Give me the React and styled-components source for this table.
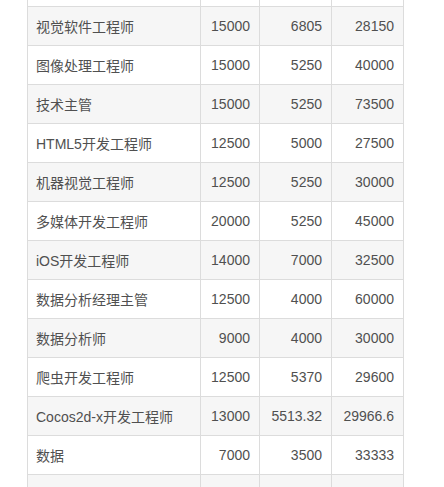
import React from "react";
import styled, { createGlobalStyle } from "styled-components";

const widths = [173, 59, 72, 72];

const rows = [
  ["", "", "", ""],
  ["视觉软件工程师", "15000", "6805", "28150"],
  ["图像处理工程师", "15000", "5250", "40000"],
  ["技术主管", "15000", "5250", "73500"],
  ["HTML5开发工程师", "12500", "5000", "27500"],
  ["机器视觉工程师", "12500", "5250", "30000"],
  ["多媒体开发工程师", "20000", "5250", "45000"],
  ["iOS开发工程师", "14000", "7000", "32500"],
  ["数据分析经理主管", "12500", "4000", "60000"],
  ["数据分析师", "9000", "4000", "30000"],
  ["爬虫开发工程师", "12500", "5370", "29600"],
  ["Cocos2d-x开发工程师", "13000", "5513.32", "29966.6"],
  ["数据", "7000", "3500", "33333"],
  ["", "", "", ""],
];

const GlobalStyle = createGlobalStyle`
  html, body {
    margin: 0;
    padding: 0;
    background: #fff;
    overflow: hidden;
  }
`;

const Page = styled.div`
  width: 444px;
  height: 487px;
  overflow: hidden;
  padding-left: 27px;
  box-sizing: border-box;
`;

const Table = styled.table`
  margin-top: -33px;
  width: 377px;
  table-layout: fixed;
  border-collapse: collapse;
  font-family: "Liberation Sans", "Noto Sans CJK SC", sans-serif;
  font-size: 14px;
  color: #505050;
`;

const Col = styled.col`
  width: ${({ $w }) => $w}px;
`;

const Row = styled.tr`
  background: ${({ $shaded }) => ($shaded ? "#f6f6f6" : "#fff")};
`;

const Cell = styled.td`
  height: 38px;
  padding: 0 9px 0 8px;
  border: 1px solid #dcdcdc;
  text-align: ${({ $num }) => ($num ? "right" : "left")};
  white-space: nowrap;
  vertical-align: middle;
`;

export default function App() {
  return (
    <Page>
      <GlobalStyle />
      <Table>
        <colgroup>
          {widths.map((w, i) => (
            <Col key={i} $w={w} />
          ))}
        </colgroup>
        <tbody>
          {rows.map((r, i) => (
            <Row key={i} $shaded={i % 2 === 1}>
              {r.map((v, j) => (
                <Cell key={j} $num={j > 0}>
                  {v}
                </Cell>
              ))}
            </Row>
          ))}
        </tbody>
      </Table>
    </Page>
  );
}
